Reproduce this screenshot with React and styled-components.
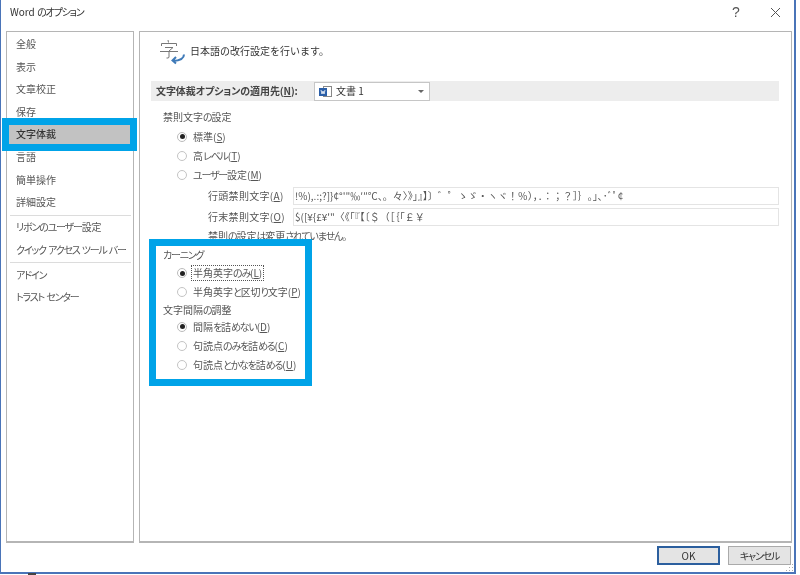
import React from 'react';
import styled, { createGlobalStyle } from 'styled-components';

const GlobalStyle = createGlobalStyle`
  html, body { margin: 0; padding: 0; background: #fff; overflow: hidden; }
  body { font-family: "Noto Sans CJK JP", "Liberation Sans", sans-serif; }
`;

const Window = styled.div`
  position: relative;
  box-sizing: border-box;
  width: 800px;
  height: 575px;
  background: #fff;
  color: #444;
  font-size: 10px;
  line-height: 14px;
  overflow: hidden;
  font-feature-settings: "palt";
  filter: blur(0.35px);
`;
const Frame = styled.div`
  box-sizing: border-box;
  width: 796px;
  height: 574px;
  display: flex;
  flex-direction: column;
  border-left: 1px solid #4a74b8;
  border-right: 2px solid #4a74b8;
  border-bottom: 2px solid #4a74b8;
`;
const TitleBar = styled.div`
  height: 31px;
  display: flex;
  align-items: center;
  padding: 0 13px 7px 9px;
  box-sizing: border-box;
  color: #333;
`;
const TitleText = styled.div`
  flex: 1;
`;
const TitleHelp = styled.div`
  width: 14px;
  text-align: center;
  margin-right: 27px;
  font-size: 14px;
  color: #555;
  font-family: "Liberation Sans", sans-serif;
`;
const Body = styled.div`
  height: 512px;
  display: flex;
  gap: 5px;
  padding: 0 2px 0 5px;
`;
const Sidebar = styled.div`
  box-sizing: border-box;
  flex: none;
  width: 128px;
  border: 1px solid #b5b5b5;
  border-bottom-width: 2px;
  padding-top: 1px;
`;
const NavItem = styled.div`
  height: 22.6px;
  margin: 0 1px;
  padding-left: 8px;
  line-height: 22.6px;
  white-space: nowrap;
  color: #555;
  background: ${({ $active }) => ($active ? '#c2c2c2' : 'transparent')};
  font-weight: ${({ $active }) => ($active ? 500 : 400)};
  ${({ $active }) => $active && 'color: #333;'}
`;
const NavRule = styled.div`
  height: 1px;
  background: #dcdcdc;
  margin: 1px 2px 0.4px 3px;
`;
const Main = styled.div`
  flex: 1;
  box-sizing: border-box;
  border: 1px solid #b5b5b5;
  border-bottom-width: 2px;
  padding: 0 12px 0 11px;
`;
const Header = styled.div`
  height: 49px;
  display: flex;
  align-items: center;
  gap: 4px;
  padding: 0 0 12px 9px;
  box-sizing: border-box;
  color: #333;
  font-feature-settings: normal;
`;
const HeaderIcon = styled.svg`
  width: 26px;
  height: 28px;
  flex: none;
`;
const ApplyBand = styled.div`
  height: 20px;
  display: flex;
  align-items: center;
  background: #ededed;
  padding-left: 5px;
  font-weight: 700;
  color: #444;
`;
const ApplyLabel = styled.div`
  width: 158px;
  letter-spacing: -0.1px;
`;
const Select = styled.div`
  box-sizing: border-box;
  width: 116px;
  height: 19px;
  display: flex;
  align-items: center;
  gap: 4px;
  padding: 0 5px 0 3px;
  background: #fff;
  border: 1px solid #c6c6c6;
  font-weight: 400;
  color: #333;
`;
const SelectText = styled.div`
  flex: 1;
`;
const Caret = styled.div`
  width: 0;
  height: 0;
  border-left: 3px solid transparent;
  border-right: 3px solid transparent;
  border-top: 3px solid #666;
`;
const GroupLabel = styled.div`
  height: ${({ $h }) => $h}px;
  line-height: ${({ $h }) => $h}px;
  padding-left: 12px;
  color: #555;
  margin: ${({ $top }) => $top || 0}px 0 ${({ $bottom }) => $bottom || 0}px;
`;
const OptionRow = styled.div`
  height: 19.2px;
  display: flex;
  align-items: center;
  padding-left: 26px;
  gap: 5px;
  color: #555;
  white-space: nowrap;
`;
const Radio = styled.div`
  box-sizing: border-box;
  width: 10px;
  height: 10px;
  flex: none;
  border-radius: 50%;
  border: 1px solid ${({ $on }) => ($on ? '#bbb' : '#c4c4c4')};
  display: flex;
  align-items: center;
  justify-content: center;
  &::after {
    content: '';
    display: ${({ $on }) => ($on ? 'block' : 'none')};
    width: 5px;
    height: 5px;
    border-radius: 50%;
    background: #222;
  }
`;
const OptionText = styled.span`
  padding: 0 1px;
  outline: ${({ $focus }) => ($focus ? '1px dotted #555' : 'none')};
`;
const Key = styled.span`
  text-decoration: underline;
  text-underline-offset: 1px;
`;
const KanaRun = styled.span`
  letter-spacing: -1.2px;
`;
const CharRow = styled.div`
  height: ${({ $h }) => $h}px;
  display: flex;
  align-items: center;
  padding-left: 57px;
  color: #555;
  white-space: pre;
`;
const CharLabel = styled.div`
  width: 85px;
  flex: none;
  letter-spacing: 0.3px;
`;
const CharInput = styled.div`
  box-sizing: border-box;
  width: 486px;
  height: 18px;
  padding: 0 1px;
  display: flex;
  align-items: center;
  border: 1px solid #e4e4e4;
  white-space: pre;
  overflow: hidden;
  color: #555;
  font-feature-settings: normal;
`;
const Footer = styled.div`
  position: relative;
  flex: 1;
  display: flex;
  justify-content: flex-end;
  gap: 8px;
  padding: 3px 3px 0 0;
`;
const DialogButton = styled.div`
  box-sizing: border-box;
  width: ${({ $w }) => $w}px;
  height: 19px;
  display: flex;
  align-items: center;
  justify-content: center;
  background: #e4e4e4;
  color: #333;
  border: ${({ $primary }) => ($primary ? '2px solid #2c5f9e' : '1px solid #aaa')};
`;
const Grip = styled.svg`
  position: absolute;
  right: 0;
  bottom: 0;
  width: 9px;
  height: 9px;
`;
const Highlight = styled.div`
  position: absolute;
  box-sizing: border-box;
  left: ${({ $x }) => $x}px;
  top: ${({ $y }) => $y}px;
  width: ${({ $w }) => $w}px;
  height: ${({ $h }) => $h}px;
  border: 7px solid #00a3e8;
`;
const TaskbarNub = styled.div`
  position: absolute;
  left: 28px;
  bottom: 0;
  width: 8px;
  height: 2px;
  background: #444;
`;

const navTop = ['全般', '表示', '文章校正', '保存', '文字体裁', '言語', '簡単操作', '詳細設定'];

// the reference font has narrow kana, so kana runs get tighter spacing
const kana = (text) =>
  text.split(/([\u3040-\u30ff]+)/).map((part, i) =>
    i % 2 ? <KanaRun key={i}>{part}</KanaRun> : part
  );

function Option({ on, focus, text, k }) {
  return (
    <OptionRow>
      <Radio $on={on} />
      <OptionText $focus={focus}>
        {kana(text)}(<Key>{k}</Key>)
      </OptionText>
    </OptionRow>
  );
}

export default function App() {
  return (
    <Window>
      <GlobalStyle />
      <Frame>
        <TitleBar>
          <TitleText>{kana('Word のオプション')}</TitleText>
          <TitleHelp>?</TitleHelp>
          <svg width="11" height="11" viewBox="0 0 11 11">
            <path d="M1 1l9 9M10 1l-9 9" stroke="#555" strokeWidth="1" fill="none" />
          </svg>
        </TitleBar>
        <Body>
          <Sidebar>
            {navTop.map((n) => (
              <NavItem key={n} $active={n === '文字体裁'}>{n}</NavItem>
            ))}
            <NavRule />
            <NavItem>{kana('リボンのユーザー設定')}</NavItem>
            <NavItem>{kana('クイック アクセス ツール バー')}</NavItem>
            <NavRule />
            <NavItem>{kana('アドイン')}</NavItem>
            <NavItem>{kana('トラスト センター')}</NavItem>
          </Sidebar>
          <Main>
            <Header>
              <HeaderIcon viewBox="0 0 26 28">
                <path d="M8 3l.5 2.500M1.500 9V6.500h15V9M5 10.500h8L9 14v6q0 1.500-2.500 1M0 14.500h18" stroke="#777" strokeWidth="1" fill="none" />
                <path d="M24 17.500c0 4-3 6-11 6.500M16 20l-3.500 3.500 3.500 3" stroke="#3f7ab8" strokeWidth="2" fill="none" />
              </HeaderIcon>
              <span>日本語の改行設定を行います。</span>
            </Header>
            <ApplyBand>
              <ApplyLabel>文字体裁オプションの適用先(<Key>N</Key>):</ApplyLabel>
              <Select>
                <svg width="14" height="13" viewBox="0 0 14 13">
                  <rect x="5.500" y="1.500" width="8" height="10" fill="#fff" stroke="#888" />
                  <rect x="1" y="3" width="8" height="8" fill="#2b5fa8" />
                  <path d="M3 5l1 4 1-3 1 3 1-4" stroke="#fff" fill="none" strokeWidth="0.8" />
                </svg>
                <SelectText>文書 1</SelectText>
                <Caret />
              </Select>
            </ApplyBand>
            <GroupLabel $h={19} $top={6} $bottom={1}>{kana('禁則文字の設定')}</GroupLabel>
            <Option on text="標準" k="S" />
            <Option text="高レベル" k="T" />
            <Option text="ユーザー設定" k="M" />
            <CharRow $h={23}>
              <CharLabel>行頭禁則文字(<Key>A</Key>)</CharLabel>
              <CharInput>{'!%),.:;?]}¢°\'"‰′″℃、。々〉》」』】〕゛゜ゝゞ・ヽヾ！％），．：；？］｝｡｣､･ﾞﾟ¢'}</CharInput>
            </CharRow>
            <CharRow $h={19}>
              <CharLabel>行末禁則文字(<Key>O</Key>)</CharLabel>
              <CharInput>{'$([¥{£¥\'"〈《「『【〔＄（［｛｢￡￥'}</CharInput>
            </CharRow>
            <CharRow $h={19}>
              <span>{kana('禁則の設定は変更されていません。')}</span>
            </CharRow>
            <GroupLabel $h={18}>{kana('カーニング')}</GroupLabel>
            <Option on focus text="半角英字のみ" k="L" />
            <Option text="半角英字と区切り文字" k="P" />
            <GroupLabel $h={14} $top={1}>{kana('文字間隔の調整')}</GroupLabel>
            <Option on text="間隔を詰めない" k="D" />
            <Option text="句読点のみを詰める" k="C" />
            <Option text="句読点とかなを詰める" k="U" />
          </Main>
        </Body>
        <Footer>
          <DialogButton $w={63} $primary>OK</DialogButton>
          <DialogButton $w={63}>{kana('キャンセル')}</DialogButton>
          <Grip viewBox="0 0 9 9">
            <path d="M7 1h1v1H7zM4 4h1v1H4zM7 4h1v1H7zM1 7h1v1H1zM4 7h1v1H4zM7 7h1v1H7z" fill="#aaa" />
          </Grip>
        </Footer>
      </Frame>
      <Highlight $x={2} $y={118} $w={135} $h={33} />
      <Highlight $x={149} $y={239} $w={163} $h={147} />
      <TaskbarNub />
    </Window>
  );
}
